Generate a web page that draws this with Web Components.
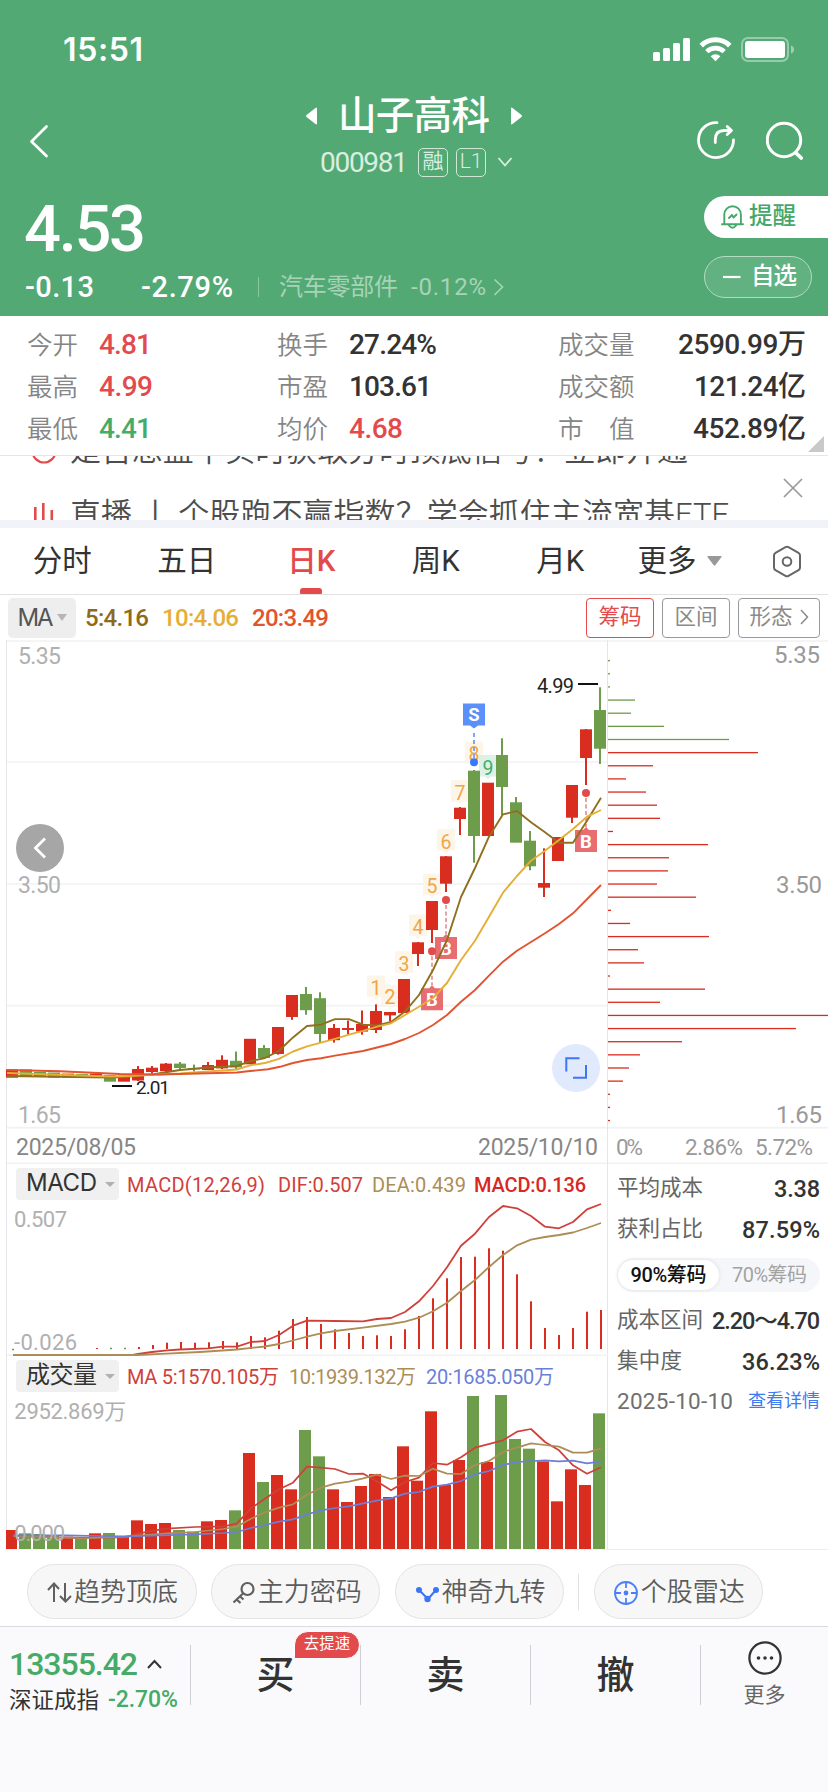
<!DOCTYPE html>
<html lang="zh-CN">
<head>
<meta charset="utf-8">
<title>山子高科 000981</title>
<style>
	body {
		margin: 0;
		width: 828px;
		height: 1792px;
		overflow: hidden;
		background: #fff;
		color: #333;
		font-family: Roboto, "Noto Sans CJK SC", sans-serif;
	}
</style>
</head>
<body>
<stock-page></stock-page>

<script>
const RED = '#d92d20';
const GREEN = '#6d9d4a';

/* Base class: puts the markup of render() in an open shadow root. */
class BaseElement extends HTMLElement {
	constructor() {
		super();
		this.attachShadow({ mode: 'open' });
	}

	connectedCallback() {
		this.shadowRoot.innerHTML = this.render();
	}
}

/* Text whose letter spacing is adjusted so it takes the width given in "w". */
class FitText extends BaseElement {
	render() {
		return `<style>:host { display: inline-block; white-space: pre; line-height: inherit; }</style><slot></slot>`;
	}

	connectedCallback() {
		super.connectedCallback();
		const target = parseFloat(this.getAttribute('w'));
		const length = [...this.textContent].length;
		const natural = this.getBoundingClientRect().width;
		const spacing = (target - natural) / Math.max(1, length - 1);
		this.style.letterSpacing = spacing + 'px';
		this.style.marginRight = -spacing + 'px';
	}
}

class StatusBar extends BaseElement {
	render() {
		return `
			<style>
				:host { display: flex; height: 88px; box-sizing: border-box; padding: 30px 34px 0 63px; justify-content: space-between; align-items: flex-start; color: #fff; }
				.time { font: 600 32px/40px Inter, sans-serif; }
				svg { margin-top: 5px; }
			</style>
			<fit-text class="time" w="80">15:51</fit-text>
			<svg width="142" height="28" viewBox="652 35 142 28" fill="#fff">
				<rect x="653" y="52" width="7" height="9" rx="1.5"/>
				<rect x="663" y="48" width="7" height="13" rx="1.5"/>
				<rect x="673" y="43" width="7" height="18" rx="1.5"/>
				<rect x="683" y="38" width="7" height="23" rx="1.5"/>
				<g fill="none" stroke="#fff">
					<path d="M701.2 45.6a20.5 20.5 0 0 1 28.6 0" stroke-width="5"/>
					<path d="M706.8 51.6a12.6 12.6 0 0 1 17.4 0" stroke-width="4.6"/>
				</g>
				<path d="M710.6 56.2a7.4 7.4 0 0 1 9.8 0l-4.9 5z"/>
				<rect x="742" y="38" width="46" height="23" rx="6" fill="none" stroke="#fff" stroke-opacity=".4" stroke-width="2"/>
				<rect x="745" y="41" width="40" height="17" rx="3"/>
				<path d="M791 45.5q3 1 3 4t-3 4z" fill-opacity=".45"/>
			</svg>
		`;
	}
}

class StockNav extends BaseElement {
	render() {
		return `
			<style>
				:host { display: grid; grid-template-columns: 200px 1fr 200px; height: 104px; color: #fff; }
				.back { padding: 36px 0 0 28px; }
				.middle { display: flex; flex-direction: column; align-items: center; }
				.name { display: flex; align-items: center; gap: 20px; height: 56px; font-size: 38.5px; line-height: 54px; font-weight: 500; }
				.code { display: flex; align-items: center; height: 36px; padding-left: 5px; font-size: 28px; color: #d9eee0; }
				.tag { box-sizing: border-box; width: 30px; height: 29px; border: 1.5px solid #cfe8d8; border-radius: 5px; font-size: 21px; line-height: 25px; text-align: center; }
				.icons { display: flex; justify-content: flex-end; gap: 29px; padding: 31px 20px 0 0; }
			</style>
			<div class="back">
				<svg width="24" height="36" viewBox="28 124 24 36"><path d="M46.5 126.5L31.5 141.5L46.5 156" fill="none" stroke="#fff" stroke-width="2.8" stroke-linecap="round" stroke-linejoin="round"/></svg>
			</div>
			<div class="middle">
				<div class="name">
					<svg width="13" height="20"><path d="M12 2.5v15q0 1.5-1.5.5L1.5 11q-1-1 0-2L10.5 2q1.5-1 1.5.5" fill="#fff"/></svg>
					<fit-text w="152">山子高科</fit-text>
					<svg width="13" height="20"><path d="M1 2.5v15q0 1.5 1.5.5L11.5 11q1-1 0-2L2.5 2Q1 1 1 2.5" fill="#fff"/></svg>
				</div>
				<div class="code">
					<fit-text w="88">000981</fit-text>
					<span class="tag" style="margin-left:10px">融</span>
					<span class="tag" style="margin-left:8px;font-weight:300">L1</span>
					<svg width="16" height="12" style="margin-left:11px"><path d="M1.5 2l6.5 7.5L14.5 2" fill="none" stroke="#d9eee0" stroke-width="1.8"/></svg>
				</div>
			</div>
			<div class="icons">
				<svg width="42" height="42" viewBox="695 119 42 42" fill="none" stroke="#fff" stroke-width="2.8" stroke-linecap="round" stroke-linejoin="round">
					<path d="M717 122.6A17.5 17.5 0 1 0 733.5 140"/>
					<path d="M715.3 142.5v-3q0-9 9-9h6M727.2 126.5l4.3 4-4.3 4"/>
				</svg>
				<svg width="42" height="42" viewBox="766 119 42 42" fill="none" stroke="#fff" stroke-width="3" stroke-linecap="round">
					<circle cx="784" cy="140" r="16.7"/><path d="M796 153l5.2 5" stroke-width="3.8"/>
				</svg>
			</div>
		`;
	}
}

class PriceHead extends BaseElement {
	render() {
		return `
			<style>
				:host { display: flex; justify-content: space-between; height: 124px; color: #fff; }
				.price { padding: 0 0 0 24px; font-size: 65px; line-height: 74px; font-weight: 500; }
				.row { display: flex; align-items: center; height: 44px; padding-left: 25px; font-size: 29px; font-weight: 500; line-height: 40px; }
				.row i { width: 1px; height: 20px; margin: 0 20px 0 25px; background: #8cc5a1; }
				.sector { display: flex; align-items: center; font-size: 24px; font-weight: 400; color: #a8d3b8; }
				.side { width: 124px; padding-top: 4px; display: flex; flex-direction: column; gap: 18px; font-size: 23.5px; line-height: 38px; }
				.remind, .fav { box-sizing: border-box; height: 42px; display: flex; align-items: center; padding-left: 17px; }
				.remind { border-radius: 21px 0 0 21px; background: #fff; color: #45a86a; font-weight: 500; gap: 5px; }
				.fav { width: 108px; border: 1px solid #b4dac2; border-radius: 21px; background: #62b281; font-weight: 500; gap: 9px; }
				.side fit-text { margin-top: -2px; }
			</style>
			<div>
				<div class="price"><fit-text w="122">4.53</fit-text></div>
				<div class="row" style="margin-top:-1px">
					<fit-text w="69">-0.13</fit-text>
					<fit-text w="92" style="margin-left:47px">-2.79%</fit-text>
					<i></i>
					<span class="sector">
						<fit-text w="119">汽车零部件</fit-text>
						<fit-text w="75" style="margin-left:13px">-0.12%</fit-text>
						<svg width="12" height="20" style="margin-left:7px"><path d="M1.5 2.5L9.5 10l-8 8" fill="none" stroke="#a8d3b8" stroke-width="1.6"/></svg>
					</span>
				</div>
			</div>
			<div class="side">
				<div class="remind">
					<svg width="23" height="26" viewBox="0 0 23 26" fill="none" stroke="#45a86a" stroke-width="1.9" stroke-linecap="round" stroke-linejoin="round">
						<path d="M1 20.2h21M3.3 20V10.5a8.3 8.3 0 0 1 16.6 0V20M8 21.5q3.5 4.5 7 0M8 14l3-3 1.5 2.5 3-3"/>
					</svg>
					<fit-text w="47">提醒</fit-text>
				</div>
				<div class="fav">
					<svg width="20" height="4"><path d="M1 2h17.5" stroke="#fff" stroke-width="2.2"/></svg>
					<fit-text w="46">自选</fit-text>
				</div>
			</div>
		`;
	}
}

/* One "label value" cell of the quote grid; "tone" is up, down or empty. */
class QuoteItem extends BaseElement {
	render() {
		return `
			<style>
				:host { display: flex; align-items: center; height: 42px; line-height: 32px; }
				:host([wide]) { justify-content: space-between; }
				.label { width: 52px; margin-right: 20px; font-size: 25.5px; font-weight: 350; color: #858585; white-space: pre; }
				:host([wide]) .label { width: auto; }
				.value { font-size: 28px; font-weight: 500; }
				:host([tone=up]) .value { color: #e24a4b; }
				:host([tone=down]) .value { color: #45ab66; }
			</style>
			<span class="label">${this.getAttribute('label')}</span>
			<fit-text class="value" w="${this.getAttribute('w')}">${this.textContent}</fit-text>
		`;
	}
}

class QuoteGrid extends BaseElement {
	render() {
		return `
			<style>
				:host { display: grid; position: relative; grid-template-columns: 250px 281px 1fr; align-content: start; height: 140px; box-sizing: border-box; padding: 8px 22px 0 27px; border-bottom: 1px solid #e6e6e6; }
				.fold { position: absolute; right: 4px; bottom: 3px; }
			</style>
			<quote-item label="今开" tone="up" w="53">4.81</quote-item>
			<quote-item label="换手" w="88">27.24%</quote-item>
			<quote-item wide label="成交量" w="128">2590.99万</quote-item>
			<quote-item label="最高" tone="up" w="54">4.99</quote-item>
			<quote-item label="市盈" w="83">103.61</quote-item>
			<quote-item wide label="成交额" w="112">121.24亿</quote-item>
			<quote-item label="最低" tone="down" w="53">4.41</quote-item>
			<quote-item label="均价" tone="up" w="54">4.68</quote-item>
			<quote-item wide label="市　值" w="113">452.89亿</quote-item>
			<svg class="fold" width="16" height="16"><path d="M16 0v16H0z" fill="#c9c9c9"/></svg>
		`;
	}
}

/* Vertically scrolling notices, caught between two lines. */
class NoticeTicker extends BaseElement {
	render() {
		return `
			<style>
				:host { display: flex; justify-content: space-between; height: 64px; overflow: hidden; border-bottom: 8px solid #f1f3f8; font-size: 31px; color: #4d4d4d; font-weight: 350; }
				.lines { margin-top: -37px; }
				.line { display: flex; align-items: center; height: 64px; line-height: 32px; padding-left: 31px; gap: 12px; }
				.close { margin: 22px 25px 0 0; }
			</style>
			<div class="lines">
				<div class="line">
					<svg width="27" height="27" fill="none" stroke="#e24a4b" stroke-width="2.2"><circle cx="13" cy="13" r="11.5"/><path d="M8 12l5 5 6-7"/></svg>
					<fit-text w="618">是否想盘中实时获取分时顶底信号？立即开通</fit-text>
				</div>
				<div class="line">
					<svg width="27" height="28" fill="#e24a4b"><rect x="3" y="6" width="2.6" height="18"/><rect x="11" y="2" width="2.6" height="22"/><rect x="19.5" y="9" width="2.6" height="15"/></svg>
					<fit-text w="659">直播 丨 个股跑不赢指数？学会抓住主流宽基ETF</fit-text>
				</div>
			</div>
			<svg class="close" width="20" height="20"><path d="M1 1l18 18M19 1L1 19" stroke="#999" stroke-width="1.7"/></svg>
		`;
	}
}

class PeriodTabs extends BaseElement {
	render() {
		return `
			<style>
				:host { display: flex; align-items: stretch; height: 67px; box-sizing: border-box; border-bottom: 1px solid #e2e2e2; font-size: 29.5px; line-height: 67px; }
				.tab { width: 124.5px; text-align: center; }
				.tab.on { color: #e24a4b; font-weight: 500; display: flex; flex-direction: column; align-items: center; }
				.tab.on::after { content: ""; width: 22px; height: 6px; margin-top: -7px; border-radius: 3px 3px 1px 1px; background: #e24a4b; }
				.more { padding-left: 15px; display: flex; align-items: center; gap: 10px; width: 134px; }
				.set { display: flex; align-items: center; }
			</style>
			<span class="tab">分时</span>
			<span class="tab">五日</span>
			<span class="tab on"><span>日K</span></span>
			<span class="tab">周K</span>
			<span class="tab">月K</span>
			<span class="more">更多<svg width="15" height="10"><path d="M1 0h13q1 0 .5 1L8.5 9q-1 1-2 0L.5 1Q0 0 1 0" fill="#999"/></svg></span>
			<span class="set"><svg width="30" height="33" viewBox="0 0 30 33" fill="none" stroke="#666" stroke-width="2"><path d="M13.5 2.2q1.5-.8 3 0l10 5.6q1.5.9 1.5 2.7v12q0 1.8-1.5 2.7l-10 5.6q-1.5.8-3 0l-10-5.6Q2 24.3 2 22.5v-12q0-1.8 1.5-2.7z"/><circle cx="15" cy="16.5" r="4.3"/></svg></span>
		`;
	}
}

class MaBar extends BaseElement {
	render() {
		return `
			<style>
				:host { display: flex; align-items: center; height: 45px; padding: 0 8px; font-size: 24px; font-weight: 500; }
				.pick { display: flex; align-items: center; justify-content: center; gap: 3px; width: 68px; height: 40px; border-radius: 5px; background: #eee; font: 400 24px Inter, sans-serif; color: #555; }
				.values { display: flex; flex: 1; gap: 13px; padding-left: 9px; }
				.btn { box-sizing: border-box; display: flex; align-items: center; justify-content: center; gap: 7px; width: 68px; height: 40px; margin-left: 8px; padding-bottom: 2px; border: 1.5px solid #999; border-radius: 4px; font-size: 21.5px; line-height: 34px; font-weight: 400; color: #8a8a8a; }
				.btn.on { border-color: #e24a4b; color: #e24a4b; }
				.btn.wide { width: 82px; }
			</style>
			<span class="pick"><fit-text w="36">MA</fit-text><svg width="10" height="8"><path d="M0 0h10L5 7z" fill="#b5b5b5"/></svg></span>
			<span class="values">
				<fit-text w="64" style="color:#8f6a1c">5:4.16</fit-text>
				<fit-text w="77" style="color:#e5ae35">10:4.06</fit-text>
				<fit-text w="77" style="color:#e2532f">20:3.49</fit-text>
			</span>
			<span class="btn on">筹码</span>
			<span class="btn">区间</span>
			<span class="btn wide">形态<svg width="9" height="16"><path d="M1 1l6.5 7L1 15" fill="none" stroke="#8a8a8a" stroke-width="1.5"/></svg></span>
		`;
	}
}

/* colour, body top, body bottom, high, low */
const CANDLES = [
	['R', 1069.4, 1077.7], ['G', 1069.4, 1076.3], ['G', 1072, 1076.3], ['G', 1072.5, 1077.7],
	['R', 1073.6, 1077.7], ['G', 1074, 1077.7], ['R', 1073.6, 1077.7], ['G', 1075, 1081.7],
	['R', 1075.6, 1081.7], ['R', 1069, 1080.5, 1066, 1081], ['R', 1067.7, 1072, 1066, 1073.6], ['R', 1063.6, 1071.2, 1063, 1072],
	['G', 1063.6, 1068, 1062, 1070], ['G', 1068, 1069.4, 1064.6, 1071.5], ['R', 1065, 1070, 1062, 1070], ['R', 1059.8, 1068.4, 1055.3, 1069],
	['G', 1060.8, 1067.4, 1051.5, 1069], ['R', 1038.8, 1064.3], ['G', 1048, 1058, 1045, 1058], ['R', 1027, 1054, 1027, 1054.6],
	['R', 995, 1017, 995, 1019.8], ['G', 994, 1010.2, 987, 1014.7], ['G', 998.2, 1034, 992.3, 1042], ['R', 1028, 1040.2, 1024, 1042.6],
	['R', 1028, 1030, 1020.5, 1034.3], ['R', 1024, 1031.6, 1010.5, 1034.7], ['R', 1011, 1030, 1004.4, 1033], ['R', 1012, 1015.4, 1012, 1021.2],
	['R', 979, 1013], ['R', 942.3, 954, 942, 966], ['R', 901, 930, 901, 943], ['R', 856.3, 883.7, 856, 892],
	['R', 807.7, 819, 807, 835], ['G', 770.7, 836, 770, 862.7], ['R', 782.7, 836], ['G', 755, 787, 738.3, 815],
	['G', 802.3, 842.7, 797, 842], ['G', 840.7, 866.3, 831, 870.3], ['R', 883, 887.7, 848.3, 897], ['R', 837, 861],
	['R', 785, 817.7, 785, 823], ['R', 729.3, 758, 729, 785], ['G', 710, 748.7, 687.3, 764]
];

const MA_LINES = [
	['#8f701f', '7,1076 110,1077.5 124,1077 152,1074.5 180,1070 208,1067.5 237,1066 250,1061.2 265,1058 279,1050.8 293,1037.4 307,1026 321,1024.7 335,1019.1 349,1019.1 363,1024.7 377,1025.4 391,1022 405,1011.6 419,995 433,970 447,940 461,897 475,868 489,836.7 503,814.3 517,811 531,822.3 545,832.3 559,842.7 573,842.7 587,820.7 601,797.7'],
	['#e5ae35', '7,1073 110,1076.5 130,1076 152,1074.8 180,1073.5 208,1071.5 237,1069.5 250,1065.3 265,1063 279,1058.8 293,1051.5 307,1046.4 321,1042.6 335,1038.8 349,1034.7 363,1030.9 377,1026.7 391,1023.3 405,1015 419,1006.7 433,998 447,983 461,960 475,940.7 489,916.7 503,892.7 517,876 531,860.7 545,850.7 559,840 573,829 587,816.7 601,810'],
	['#e2532f', '7,1070 60,1071.3 120,1074 160,1074.5 237,1072.5 250,1071 268,1069.3 280,1066.8 293,1063 307,1060 321,1058.2 335,1055.6 363,1051 377,1047.5 391,1044 405,1039 419,1033 433,1025 447,1015 461,1001.7 475,990 489,975.7 503,961.7 517,950.7 545,933.3 559,924 573,913.3 601,885']
];

/* Candles of the daily chart with averages, nine-turn counts and B/S marks. */
class KlineChart extends BaseElement {
	candle([tone, top, bottom, high, low], i) {
		const x = 12 + i * 14;
		const color = tone === 'R' ? RED : GREEN;
		const wick = high ? `<rect x="${x - 1}" y="${high}" width="2" height="${low - high}" fill="${color}"/>` : '';
		return `${wick}<rect x="${x - 6}" y="${top}" width="12" height="${bottom - top}" fill="${color}"/>`;
	}

	count(y, n) {
		const x = 12 + (25 + n) * 14;
		const green = n === 9;
		return `
			<path d="M${x - 9} ${y}h18v21.5h-6l-3 3-3-3h-6z" fill="${green ? '#d8efe2' : '#fdf3e4'}" fill-opacity=".85"/>
			<text x="${x}" y="${y + 19.5}" text-anchor="middle" font-size="19.5" fill="${green ? '#3fae6e' : '#f0a646'}">${n}</text>`;
	}

	buy(x, dot, y) {
		return `
			<path d="M${x} ${dot + 5}V${y - 3}" stroke="#e8959a" stroke-width="1.8" stroke-dasharray="4 2.5"/>
			<circle cx="${x}" cy="${dot}" r="4" fill="#e24a4b"/>
			<path d="M${x - 11} ${y}h8l3-3 3 3h8v22h-22z" fill="#e35358" fill-opacity=".85"/>
			<text x="${x}" y="${y + 17.5}" text-anchor="middle" font-size="18.5" font-weight="700" fill="#fff">B</text>`;
	}

	render() {
		const counts = [975.5, 984.7, 951.3, 914.4, 873.7, 829, 780, 741.7, 755];
		return `
			<style>:host, svg { display: block; }</style>
			<svg width="608" height="524" viewBox="0 640 608 524" font-size="23" fill="#b0b0b0">
				<path d="M7 641h601M7 762h601M7 884h601M7 1005.7h601M7 1127.7h601M7 1163.3h601" stroke="#f2f2f4" stroke-width="1.7"/>
				<path d="M6.5 640v524M607.5 640v524" stroke="#e6e6e8"/>
				<text x="18" y="663.5" textLength="43">5.35</text>
				<text x="18" y="893" textLength="43">3.50</text>
				<text x="18" y="1123" textLength="43">1.65</text>
				<text x="16" y="1155" textLength="120" fill="#868686">2025/08/05</text>
				<text x="478" y="1155" textLength="120" fill="#868686">2025/10/10</text>
				${counts.map((y, i) => this.count(y, i + 1)).join('')}
				${CANDLES.map(this.candle).join('')}
				<path d="M474 733v25" stroke="#7fa6f5" stroke-width="2" stroke-dasharray="4 3"/>
				<circle cx="474" cy="762.3" r="4" fill="#3a76ff"/>
				<path d="M463 703.5h22v22h-7l-4 3-4-3h-7z" fill="#5b8ff9"/>
				<text x="474" y="721" text-anchor="middle" font-size="18.5" font-weight="700" fill="#fff">S</text>
				${this.buy(586, 793, 830)}
				${this.buy(446, 900, 937)}
				${this.buy(432, 951.3, 988.3)}
				${MA_LINES.map(([color, points]) => `<polyline points="${points}" fill="none" stroke="${color}" stroke-width="1.9" stroke-linejoin="round"/>`).join('')}
				<path d="M578 684h20M112 1086h20" stroke="#111" stroke-width="2"/>
				<text x="537" y="692.5" textLength="37" font-size="20" fill="#222">4.99</text>
				<text x="136" y="1093.5" textLength="34" font-size="19" fill="#222">2.01</text>
				<circle cx="40" cy="848" r="24" fill="#a6a6a6"/>
				<path d="M45 838.5L35.5 848l9.5 9.5" fill="none" stroke="#fff" stroke-width="2.8"/>
				<circle cx="576" cy="1068" r="24" fill="#e1eafc"/>
				<path d="M566.3 1071.5v-13.2H579.5M586 1065v12.7h-13" fill="none" stroke="#3d76f5" stroke-width="2"/>
			</svg>
		`;
	}
}

/* Horizontal bars of holdings by price; the first seven lie above the close. */
class ChipChart extends BaseElement {
	render() {
		const bars = [2, 2, 2, 27, 23, 56, 121, 150, 45, 18, 38, 49, 52, 5, 100, 61, 60, 49, 88, 3, 22, 101, 30, 36, 2, 97, 52, 220, 188, 74, 32, 21, 15, 2, 2, 2];
		return `
			<style>:host, svg { display: block; }</style>
			<svg width="220" height="524" viewBox="608 640 220 524" font-size="24" fill="#999">
				<path d="M608 641h220M608 1127.7h220M608 1163.3h220" stroke="#f2f2f4" stroke-width="1.7"/>
				${bars.map((w, i) => `<rect x="608" y="${660 + i * 13.14}" width="${w}" height="1.3" fill="${i < 7 ? GREEN : RED}"/>`).join('')}
				<text x="774" y="663" textLength="46">5.35</text>
				<text x="776" y="892.5" textLength="46">3.50</text>
				<text x="776" y="1122.7" textLength="46">1.65</text>
				<g font-size="22.5">
					<text x="616" y="1155" textLength="27">0%</text>
					<text x="685" y="1155" textLength="58">2.86%</text>
					<text x="755" y="1155" textLength="58">5.72%</text>
				</g>
			</svg>
		`;
	}
}

/* Head row of an indicator panel: picker on the left, values in the slot. */
class IndicatorHead extends BaseElement {
	render() {
		return `
			<style>
				:host { display: flex; align-items: flex-start; height: 38px; box-sizing: border-box; padding: 4px 0 0 9px; border-left: 1px solid #e6e6e8; border-right: 1px solid #e6e6e8; margin-left: 6px; }
				.pick { display: flex; align-items: center; gap: 8px; box-sizing: border-box; width: 103px; height: 32px; padding-left: 10px; border-radius: 4px; background: #f0f0f0; font: 400 24px/30px Inter, "Noto Sans CJK SC", sans-serif; }
				.pick fit-text { margin-top: -2px; }
				.values { display: flex; line-height: 34px; padding-left: 8px; font-size: 20px; }
			</style>
			<span class="pick"><fit-text w="71">${this.getAttribute('name')}</fit-text><svg width="10" height="7"><path d="M0 1h10L5 6z" fill="#b0b0b0"/></svg></span>
			<span class="values"><slot></slot></span>
		`;
	}
}

class MacdPanel extends BaseElement {
	render() {
		const tops = [1347, 1345, 1342.7, 1342, 1342.7, 1342.3, 1341, 1342.3, 1336, 1337.3, 1330.7, 1319, 1317, 1324, 1329.3, 1333, 1336, 1335.3, 1336, 1329.3, 1316, 1298.3, 1278.3, 1257, 1256.7, 1248.3, 1250.7, 1274.3, 1301.3, 1328, 1335, 1328, 1311.7, 1310];
		return `
			<style>:host, svg { display: block; }</style>
			<indicator-head name="MACD">
				<fit-text w="138" style="color:#d0403a">MACD(12,26,9)</fit-text>
				<fit-text w="85" style="color:#d0403a;margin-left:13px">DIF:0.507</fit-text>
				<fit-text w="94" style="color:#ad8d56;margin-left:9px">DEA:0.439</fit-text>
				<fit-text w="112" style="color:#d8281f;margin-left:8px;font-weight:500">MACD:0.136</fit-text>
			</indicator-head>
			<svg width="608" height="154" viewBox="0 1202 608 154">
				<path d="M6.5 1202v154M607.5 1202v154" stroke="#e6e6e8"/>
				<path d="M7 1355.3h601" stroke="#f2f2f4" stroke-width="1.7"/>
				${tops.map((y, i) => `<rect x="${138 + i * 14}" y="${y}" width="2" height="${1349 - y}" fill="${RED}"/>`).join('')}
				<path d="M12 1349.5h2M110 1348.5h2M124 1348.5h2" stroke="${GREEN}" stroke-width="1.3"/>
				<path d="M96 1348.5h2" stroke="${RED}"/>
				<g fill="none" stroke-width="1.8" stroke-linejoin="round">
					<polyline stroke="#d0403a" points="13,1355.5 130,1355.5 138,1354 152,1352 167,1350.3 180,1349.5 208,1348.3 223,1346.7 237,1346.7 251,1342 265,1341 279,1335 293,1325.7 307,1320.7 335,1321 363,1321.3 377,1319 391,1318 405,1312 419,1301.3 433,1286 447,1267.3 461,1245.7 475,1233.7 489,1217 503,1206 517,1208.3 531,1216 545,1226.7 559,1228.3 573,1222 587,1209.3 601,1204"/>
					<polyline stroke="#ad8d56" points="13,1355 138,1355 166,1353.7 200,1352 237,1349.5 265,1346.5 279,1344 293,1340.5 307,1336.7 321,1333.3 335,1331 363,1327.7 391,1324 405,1321.7 419,1317.7 433,1311.3 447,1302.7 461,1291 475,1280 489,1267 503,1255 517,1245.3 531,1239.7 545,1237 559,1235 573,1232.5 587,1228 601,1223"/>
				</g>
				<g font-size="22" fill="#b0b0b0">
					<text x="14" y="1227" textLength="53">0.507</text>
					<text x="14" y="1350" textLength="63">-0.026</text>
				</g>
			</svg>
		`;
	}
}

/* The drawing uses three units to the pixel. */
class VolumePanel extends BaseElement {
	render() {
		const tops = [1140, 1150, 1152, 1155, 1160, 1165, 1150, 1149, 1160, 1111, 1122, 1119, 1140, 1145, 1114, 1110, 1081, 909, 996, 975, 1018, 840, 919, 1018, 1056, 1008, 972, 1041, 889, 992, 784, 1005, 930, 738, 936, 735, 867, 896, 934, 1054, 958, 1005, 790];
		return `
			<style>:host, svg { display: block; }</style>
			<indicator-head name="成交量">
				<fit-text w="152" style="color:#d0403a">MA 5:1570.105万</fit-text>
				<fit-text w="127" style="color:#ad8d56;margin-left:10px">10:1939.132万</fit-text>
				<fit-text w="128" style="color:#6b7fd8;margin-left:10px">20:1685.050万</fit-text>
			</indicator-head>
			<svg width="608" height="156" viewBox="0 732 1824 468">
				<path d="M19.5 732v468M1822.5 732v468" stroke="#e6e6e8" stroke-width="3"/>
				<path d="M20 1199h1804" stroke="#f0f0f2" stroke-width="4"/>
				${tops.map((y, i) => `<rect x="${Math.max(18, 15 + i * 42)}" y="${y}" width="${i ? 36 : 33}" height="${1197 - y}" fill="${CANDLES[i][0] === 'R' ? RED : GREEN}"/>`).join('')}
				<g fill="none" stroke-width="5.2" stroke-linejoin="round">
					<polyline stroke="#d0403a" points="40,1157 160,1162 250,1163 375,1162 417,1150 460,1142 500,1136 585,1131 670,1129 710,1121 753,1075 795,1046 837,1018 879,998 921,950 963,953 1005,957 1047,972 1090,971 1130,994 1173,1021 1215,996 1257,983 1298,939 1341,944 1383,922 1425,893 1509,871 1551,845 1593,837 1635,876 1677,901 1719,946 1761,971 1803,952"/>
					<polyline stroke="#ad8d56" points="40,1158 250,1165 375,1160 500,1150 585,1146 670,1137 710,1130 753,1106 795,1087 837,1073 879,1063 921,1034 963,1013 1005,1001 1047,995 1090,985 1130,974 1173,987 1215,977 1257,978 1298,956 1341,971 1383,972 1425,945 1467,933 1509,906 1551,893 1593,880 1635,885 1677,890 1719,908 1761,908 1803,895"/>
					<polyline stroke="#6b7fd8" points="40,1156 200,1156 300,1158 375,1159 585,1153 670,1149 710,1146 753,1134 795,1125 837,1115 879,1108 921,1093 963,1081 1005,1074 1047,1069 1090,1060 1130,1052 1173,1045 1215,1031 1257,1026 1298,1010 1341,1004 1383,993 1425,973 1467,963 1509,945 1551,936 1635,931 1677,934 1719,932 1761,940 1803,934"/>
				</g>
				<g font-size="66" fill="#b0b0b0">
					<text x="43" y="807" textLength="336">2952.869万</text>
					<text x="43" y="1174" textLength="152">0.000</text>
				</g>
			</svg>
		`;
	}
}

class ChipStats extends BaseElement {
	render() {
		return `
			<style>
				:host { display: block; padding: 5px 8px 0 9px; height: 386px; box-sizing: border-box; border-bottom: 1px solid #ededf0; }
				.row { display: flex; justify-content: space-between; align-items: center; height: 40.5px; font-size: 21.5px; line-height: 30px; color: #666; }
				.row > fit-text { margin-top: -2px; }
				.row b { font-size: 23.5px; font-weight: 500; color: #333; }
				.seg { display: flex; align-items: center; height: 34px; margin: 8px 0 9px 0; border-radius: 17px; background: #f5f6fa; font-size: 20px; line-height: 30px; color: #a3a3a3; }
				.seg span { flex: 1; text-align: center; }
				.seg .on { margin-left: 1px; border-radius: 15px; background: #fff; box-shadow: 0 0 4px #dcdde2; color: #111; font-weight: 500; }
				.row a { margin-top: -3px; font-size: 18px; color: #3d7bf0; }
			</style>
			<div class="row"><fit-text w="86">平均成本</fit-text><b><fit-text w="46">3.38</fit-text></b></div>
			<div class="row"><fit-text w="86">获利占比</fit-text><b><fit-text w="78">87.59%</fit-text></b></div>
			<div class="seg"><span class="on"><fit-text w="76">90%筹码</fit-text></span><span><fit-text w="75">70%筹码</fit-text></span></div>
			<div class="row"><fit-text w="86">成本区间</fit-text><b><fit-text w="108">2.20～4.70</fit-text></b></div>
			<div class="row"><fit-text w="65">集中度</fit-text><b><fit-text w="78">36.23%</fit-text></b></div>
			<div class="row"><fit-text w="116" style="font-size:22.5px;color:#707070">2025-10-10</fit-text><a><fit-text w="72">查看详情</fit-text></a></div>
		`;
	}
}

/* Pill link: icon in the "icon" slot, caption in the default one. */
class ToolPill extends BaseElement {
	render() {
		return `
			<style>
				:host { display: flex; align-items: center; box-sizing: border-box; width: 169.5px; height: 55px; padding-left: 19px; border: 1px solid #e4e4e4; border-radius: 27.5px; background: #f7f7f7; font-size: 26px; line-height: 36px; font-weight: 350; color: #5c5c5c; }
				.icon { display: flex; flex: none; width: 26px; margin: 2px 1px 0 0; }
			</style>
			<span class="icon"><slot name="icon"></slot></span><span><slot></slot></span>
		`;
	}
}

class ToolRow extends BaseElement {
	render() {
		return `
			<style>
				:host { display: flex; align-items: center; gap: 14.3px; height: 77px; box-sizing: border-box; padding: 8px 27px 1px; border-bottom: 1px solid #d9dade; }
				i { width: 1px; height: 36px; background: #e0e0e0; }
			</style>
			<tool-pill><svg slot="icon" width="26" height="24" fill="none" stroke="#606060" stroke-width="2"><path d="M7 21V3M1 9l6-6.5L12 8M18 2v18M13 15l5.5 5.5L24 15"/></svg>趋势顶底</tool-pill>
			<tool-pill><svg slot="icon" width="26" height="24" fill="none" stroke="#606060" stroke-width="2.2"><circle cx="16.5" cy="8" r="6"/><path d="M12 12.500L2.500 21.500M5 18l4.500 4M8.500 15l4 3.500"/></svg>主力密码</tool-pill>
			<tool-pill><svg slot="icon" width="26" height="24" fill="#3d74f6"><path d="M4 9l9 9 8-9" fill="none" stroke="#3d74f6" stroke-width="2"/><circle cx="4" cy="9" r="3"/><circle cx="21" cy="9" r="3"/><circle cx="12.5" cy="18" r="3.2"/></svg>神奇九转</tool-pill>
			<i></i>
			<tool-pill><svg slot="icon" width="26" height="24" fill="none" stroke="#4a80f7" stroke-width="1.8"><circle cx="12" cy="12" r="11"/><path d="M12 1v6M12 17v6M1 12h6M17 12h6"/><circle cx="12" cy="12" r="1.5" fill="#4a80f7"/></svg>个股雷达</tool-pill>
		`;
	}
}

class TradeBar extends BaseElement {
	render() {
		return `
			<style>
				:host { display: flex; height: 165px; box-sizing: border-box; padding-top: 18px; background: #fafafc; }
				.index { width: 190px; height: 60px; padding-left: 9px; box-sizing: border-box; }
				.top, .sub { display: flex; align-items: center; }
				.top { height: 38px; gap: 9px; font-size: 32px; font-weight: 500; color: #45ab66; }
				.sub { height: 34px; gap: 9px; font-size: 22.5px; line-height: 30px; }
				.sub b { font-size: 23px; font-weight: 500; color: #45ab66; }
				.act { position: relative; box-sizing: border-box; width: 170px; height: 60px; border-left: 1px solid #d0d0d4; text-align: center; font-size: 38px; line-height: 60px; font-weight: 500; }
				.badge { position: absolute; right: 0; top: -14px; width: 66px; height: 28px; box-sizing: border-box; border: 1px solid #fff; border-radius: 14px 14px 14px 1px; background: #e24a4b; color: #fff; font-size: 15.5px; line-height: 25px; font-weight: 400; }
				.more { flex: 1; height: 80px; display: flex; flex-direction: column; align-items: center; margin-top: -5px; font-size: 21px; line-height: 38px; color: #666; }
				.wall { width: 1px; height: 60px; background: #d0d0d4; }
			</style>
			<div class="index">
				<div class="top"><fit-text w="129">13355.42</fit-text><svg width="15" height="10"><path d="M1 9l6.5-7L14 9" fill="none" stroke="#333" stroke-width="2"/></svg></div>
				<div class="sub"><fit-text w="90">深证成指</fit-text><b><fit-text w="70">-2.70%</fit-text></b></div>
			</div>
			<div class="act">买<span class="badge">去提速</span></div>
			<div class="act">卖</div>
			<div class="act">撤</div>
			<div class="wall"></div>
			<div class="more">
				<svg width="36" height="36" fill="#333"><circle cx="18" cy="18" r="15.6" fill="none" stroke="#333" stroke-width="2.3"/><circle cx="11.5" cy="18" r="1.8"/><circle cx="18" cy="18" r="1.8"/><circle cx="24.5" cy="18" r="1.8"/></svg>
				更多
			</div>
		`;
	}
}

class StockPage extends BaseElement {
	render() {
		return `
			<style>
				:host { display: block; }
				header { height: 316px; background: #53a974; }
				.charts { display: grid; grid-template-columns: 608px 220px; height: 910px; }
			</style>
			<header>
				<status-bar></status-bar>
				<stock-nav></stock-nav>
				<price-head></price-head>
			</header>
			<quote-grid></quote-grid>
			<notice-ticker></notice-ticker>
			<period-tabs></period-tabs>
			<ma-bar></ma-bar>
			<div class="charts">
				<div>
					<kline-chart></kline-chart>
					<macd-panel></macd-panel>
					<volume-panel></volume-panel>
				</div>
				<div>
					<chip-chart></chip-chart>
					<chip-stats></chip-stats>
				</div>
			</div>
			<tool-row></tool-row>
			<trade-bar></trade-bar>
		`;
	}
}

customElements.define('stock-page', StockPage);
customElements.define('status-bar', StatusBar);
customElements.define('stock-nav', StockNav);
customElements.define('price-head', PriceHead);
customElements.define('quote-grid', QuoteGrid);
customElements.define('quote-item', QuoteItem);
customElements.define('notice-ticker', NoticeTicker);
customElements.define('period-tabs', PeriodTabs);
customElements.define('ma-bar', MaBar);
customElements.define('kline-chart', KlineChart);
customElements.define('chip-chart', ChipChart);
customElements.define('macd-panel', MacdPanel);
customElements.define('volume-panel', VolumePanel);
customElements.define('indicator-head', IndicatorHead);
customElements.define('chip-stats', ChipStats);
customElements.define('tool-row', ToolRow);
customElements.define('tool-pill', ToolPill);
customElements.define('trade-bar', TradeBar);
// Last, so that every text is measured in its final font.
customElements.define('fit-text', FitText);
</script>
</body>
</html>
